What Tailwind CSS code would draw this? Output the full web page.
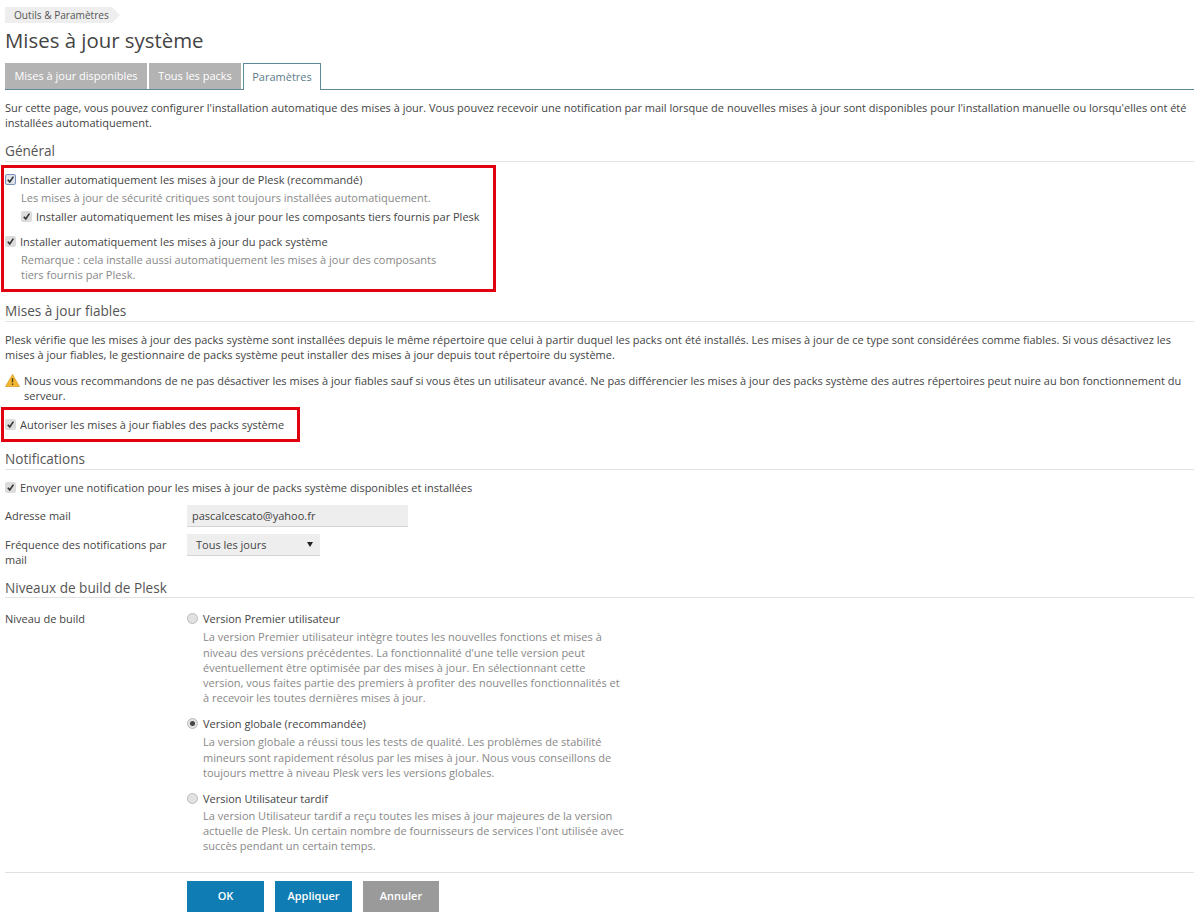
<!DOCTYPE html>
<html lang="fr"><head><meta charset="utf-8"><title>Mises à jour système</title>
<script src="https://cdn.jsdelivr.net/npm/@tailwindcss/browser@4"></script></head>
<body class="bg-white">
<div class="h-[923px] w-[1200px] overflow-hidden pl-[5px] pr-[6px] pt-[7px] font-['Open_Sans',sans-serif] text-[11px] leading-[15.4px] text-[#444]">
  <div class="flex h-[16px] w-fit items-center">
    <span class="flex h-[16px] items-center bg-[#eeeeee] pl-[9px] pr-[3px] pt-[1px] text-[10.1px] text-[#555]">Outils &amp; Paramètres</span>
    <span class="h-0 w-0 border-y-[8px] border-l-[8px] border-y-transparent border-l-[#eeeeee]"></span>
  </div>
  <h1 class="mt-[2px] h-[30px] text-[20.4px] leading-[30px] text-[#444]">Mises à jour système</h1>
  <div class="mt-[8px] flex h-[27px] gap-[2px] border-b border-[#5f8a9c]">
    <span class="flex h-[26px] w-[142px] items-center justify-center bg-[#b3b3b3] text-white">Mises à jour disponibles</span>
    <span class="flex h-[26px] w-[92px] items-center justify-center bg-[#b3b3b3] text-white">Tous les packs</span>
    <span class="flex h-[27px] w-[78px] items-center justify-center border border-b-0 border-[#5f8a9c] bg-white text-[#5d7c8a]">Paramètres</span>
  </div>
  <p class="mt-[10px]">Sur cette page, vous pouvez configurer l'installation automatique des mises à jour. Vous pouvez recevoir une notification par mail lorsque de nouvelles mises à jour sont disponibles pour l'installation manuelle ou lorsqu'elles ont été installées automatiquement.</p>

  <h2 class="mt-[10px] h-[21px] border-b border-[#e3e3e3] text-[13.6px] leading-[20px] text-[#555]">Général</h2>

  <div class="mt-[3px] -ml-[4px] h-[127px] w-[495px] border-[3px] border-[#e1000f] pl-[1px] pt-[4px]">
    <div class="flex h-[15px] items-center gap-[4px]">
      <span class="flex size-[11px] items-center justify-center rounded-[2px] border border-[#7d93bd] bg-[#dfe3ea]"><svg viewBox="0 0 10 10" class="size-[9px]"><path d="M2 5.2 4.2 7.6 8.2 1.8" fill="none" stroke="#333" stroke-width="1.8"/></svg></span>
      <span>Installer automatiquement les mises à jour de Plesk (recommandé)</span>
    </div>
    <p class="ml-[16px] mt-[3px] h-[15px] text-[#888]">Les mises à jour de sécurité critiques sont toujours installées automatiquement.</p>
    <div class="ml-[16px] mt-[4px] flex h-[15px] items-center gap-[4px]">
      <span class="flex size-[11px] items-center justify-center rounded-[2px] bg-[#dcdcdc]"><svg viewBox="0 0 10 10" class="size-[9px]"><path d="M2 5.2 4.2 7.6 8.2 1.8" fill="none" stroke="#333" stroke-width="1.8"/></svg></span>
      <span>Installer automatiquement les mises à jour pour les composants tiers fournis par Plesk</span>
    </div>
    <div class="mt-[10px] flex h-[15px] items-center gap-[4px]">
      <span class="flex size-[11px] items-center justify-center rounded-[2px] bg-[#dcdcdc]"><svg viewBox="0 0 10 10" class="size-[9px]"><path d="M2 5.2 4.2 7.6 8.2 1.8" fill="none" stroke="#333" stroke-width="1.8"/></svg></span>
      <span>Installer automatiquement les mises à jour du pack système</span>
    </div>
    <p class="ml-[16px] mt-[3px] w-[430px] text-[#888]">Remarque : cela installe aussi automatiquement les mises à jour des composants tiers fournis par Plesk.</p>
  </div>

  <h2 class="mt-[9px] h-[21px] border-b border-[#e3e3e3] text-[13.6px] leading-[20px] text-[#555]">Mises à jour fiables</h2>
  <p class="mt-[10px]">Plesk vérifie que les mises à jour des packs système sont installées depuis le même répertoire que celui à partir duquel les packs ont été installés. Les mises à jour de ce type sont considérées comme fiables. Si vous désactivez les mises à jour fiables, le gestionnaire de packs système peut installer des mises à jour depuis tout répertoire du système.</p>
  <div class="mt-[10px] flex gap-[4px]">
    <svg viewBox="0 0 16 14" class="mt-[1px] h-[13px] w-[15px] shrink-0"><path d="M8 .5 15.5 13.5H.5Z" fill="#f2b632" stroke="#d99a1c" stroke-width=".8"/><path d="M8 4.5V9M8 10.2v1.6" stroke="#4a3a10" stroke-width="1.5"/></svg>
    <p>Nous vous recommandons de ne pas désactiver les mises à jour fiables sauf si vous êtes un utilisateur avancé. Ne pas différencier les mises à jour des packs système des autres répertoires peut nuire au bon fonctionnement du serveur.</p>
  </div>
  <div class="mt-[4px] -ml-[4px] flex h-[35px] w-[299px] items-center gap-[4px] border-[3px] border-[#e1000f] pl-[1px]">
    <span class="flex size-[11px] items-center justify-center rounded-[2px] bg-[#dcdcdc]"><svg viewBox="0 0 10 10" class="size-[9px]"><path d="M2 5.2 4.2 7.6 8.2 1.8" fill="none" stroke="#333" stroke-width="1.8"/></svg></span>
    <span>Autoriser les mises à jour fiables des packs système</span>
  </div>

  <h2 class="mt-[7px] h-[21px] border-b border-[#e3e3e3] text-[13.6px] leading-[20px] text-[#555]">Notifications</h2>
  <div class="mt-[10px] flex h-[15px] items-center gap-[4px]">
    <span class="flex size-[11px] items-center justify-center rounded-[2px] bg-[#dcdcdc]"><svg viewBox="0 0 10 10" class="size-[9px]"><path d="M2 5.2 4.2 7.6 8.2 1.8" fill="none" stroke="#333" stroke-width="1.8"/></svg></span>
    <span>Envoyer une notification pour les mises à jour de packs système disponibles et installées</span>
  </div>
  <div class="mt-[10px] flex">
    <span class="w-[182px] pt-[3px]">Adresse mail</span>
    <span class="flex h-[22px] w-[221px] items-center border-b border-[#d4d4d4] bg-[#eeeeee] pl-[5px]">pascalcescato@yahoo.fr</span>
  </div>
  <div class="mt-[7px] flex h-[42px]">
    <span class="mr-[12px] w-[170px] pr-[4px] pt-[3px] leading-[15px]">Fréquence des notifications par mail</span>
    <span class="flex h-[22px] w-[133px] items-center justify-between border-b border-[#d4d4d4] bg-[#eeeeee] pl-[9px] pr-[7px]">Tous les jours<span class="h-0 w-0 border-x-[3px] border-t-[5px] border-x-transparent border-t-[#222]"></span></span>
  </div>

  <h2 class="mt-[2px] h-[20px] border-b border-[#e3e3e3] text-[13.6px] leading-[20px] text-[#555]">Niveaux de build de Plesk</h2>
  <div class="mt-[13px] flex">
    <span class="w-[182px]">Niveau de build</span>
    <div class="w-[440px]">
      <div class="flex h-[15px] items-center gap-[5px]">
        <span class="size-[11px] rounded-full border border-[#bbb] bg-[#e2e2e2]"></span><span>Version Premier utilisateur</span>
      </div>
      <p class="ml-[16px] mt-[3px] leading-[15.2px] text-[#888]">La version Premier utilisateur intègre toutes les nouvelles fonctions et mises à niveau des versions précédentes. La fonctionnalité d'une telle version peut éventuellement être optimisée par des mises à jour. En sélectionnant cette version, vous faites partie des premiers à profiter des nouvelles fonctionnalités et à recevoir les toutes dernières mises à jour.</p>
      <div class="mt-[11px] flex h-[15px] items-center gap-[5px]">
        <span class="flex size-[11px] items-center justify-center rounded-full border border-[#bbb] bg-[#e2e2e2]"><span class="size-[5px] rounded-full bg-[#444]"></span></span><span>Version globale (recommandée)</span>
      </div>
      <p class="ml-[16px] mt-[3px] leading-[15.2px] text-[#888]">La version globale a réussi tous les tests de qualité. Les problèmes de stabilité mineurs sont rapidement résolus par les mises à jour. Nous vous conseillons de toujours mettre à niveau Plesk vers les versions globales.</p>
      <div class="mt-[11px] flex h-[15px] items-center gap-[5px]">
        <span class="size-[11px] rounded-full border border-[#bbb] bg-[#e2e2e2]"></span><span>Version Utilisateur tardif</span>
      </div>
      <p class="ml-[16px] mt-[2px] leading-[15.2px] text-[#888]">La version Utilisateur tardif a reçu toutes les mises à jour majeures de la version actuelle de Plesk. Un certain nombre de fournisseurs de services l'ont utilisée avec succès pendant un certain temps.</p>
    </div>
  </div>
  <div class="mt-[18px] flex gap-[11px] border-t border-[#e0e0e0] pl-[182px] pt-[8px]">
    <span class="flex h-[31px] w-[77px] items-center justify-center bg-[#0f7cb3] font-semibold text-white">OK</span>
    <span class="flex h-[31px] w-[77px] items-center justify-center bg-[#0f7cb3] font-semibold text-white">Appliquer</span>
    <span class="flex h-[31px] w-[76px] items-center justify-center bg-[#9a9a9a] font-semibold text-white">Annuler</span>
  </div>
</div>
</body></html>
